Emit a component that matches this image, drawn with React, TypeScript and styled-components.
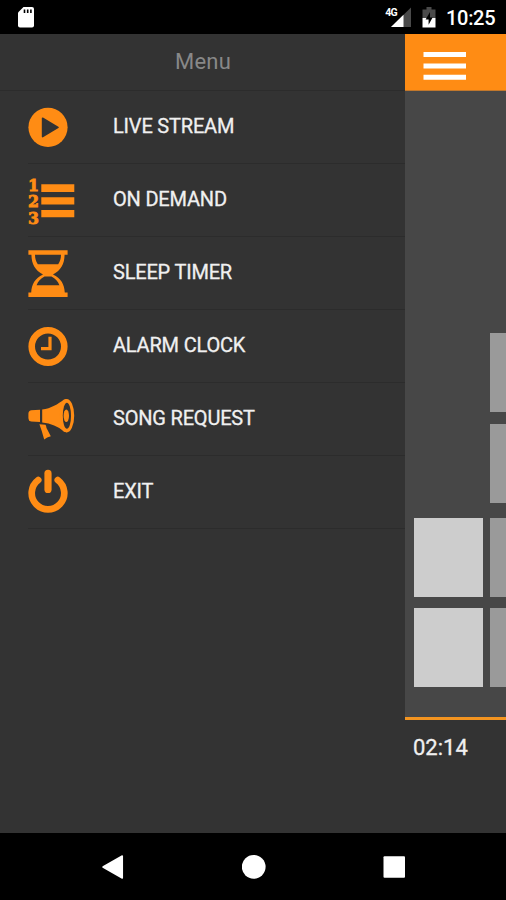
import React from "react";
import styled, { createGlobalStyle } from "styled-components";

const ORANGE = "#ff8c14";
const PANEL = "#333333";
const DIVIDER = "#2c2c2c";

const GlobalStyle = createGlobalStyle`
  body {
    margin: 0;
    background: #000;
    font-family: Roboto, "Liberation Sans", sans-serif;
  }
`;

const Screen = styled.div`
  display: flex;
  flex-direction: column;
  width: 506px;
  height: 900px;
  overflow: hidden;
  background: #000;
`;

const StatusBar = styled.header`
  display: flex;
  align-items: center;
  justify-content: space-between;
  flex: none;
  height: 34px;
  padding: 0 11px 0 16px;
  color: #fff;
`;

const StatusGroup = styled.div`
  display: flex;
  align-items: center;
`;

const Clock = styled.span`
  width: 49px;
  margin-left: 9px;
  padding-top: 2px;
  font-size: 20px;
  line-height: 32px;
  font-weight: 500;
  white-space: nowrap;
  letter-spacing: -0.3px;
`;

const Body = styled.div`
  display: flex;
  flex: none;
  height: 799px;
`;

const Drawer = styled.nav`
  display: flex;
  flex-direction: column;
  flex: none;
  width: 405px;
  background: ${PANEL};
`;

const DrawerTitle = styled.h1`
  box-sizing: border-box;
  flex: none;
  height: 57px;
  margin: 0;
  padding-left: 1px;
  border-bottom: 1px solid ${DIVIDER};
  color: #888;
  font-size: 22px;
  font-weight: 400;
  line-height: 55px;
  letter-spacing: 0.2px;
  text-align: center;
`;

const MenuList = styled.ul`
  margin: 0;
  padding: 0 0 0 28px;
  list-style: none;
`;

const MenuItem = styled.li`
  box-sizing: border-box;
  display: flex;
  align-items: flex-start;
  height: 73px;
  border-bottom: 1px solid ${DIVIDER};
`;

const MenuIcon = styled.svg`
  flex: none;
  width: 48px;
  height: 72px;
  color: ${ORANGE};
`;

const MenuLabel = styled.span`
  margin-left: 37px;
  color: #f0f0f0;
  font-size: 20px;
  line-height: 70px;
  letter-spacing: -0.19px;
  white-space: nowrap;
  -webkit-text-stroke: 0.3px #f0f0f0;
`;

const Page = styled.main`
  display: flex;
  flex-direction: column;
  flex: 1;
  min-width: 0;
  overflow: hidden;
  background: #474747;
`;

const AppBar = styled.div`
  box-sizing: border-box;
  flex: none;
  height: 57px;
  padding: 18px 0 0 18px;
  border-bottom: 1px solid #c2782c;
  background: ${ORANGE};
`;

const BurgerSvg = styled.svg`
  display: block;
  width: 44px;
  height: 30px;
`;

const Equalizer = styled.div`
  display: flex;
  align-items: flex-end;
  gap: 7px;
  box-sizing: border-box;
  flex: none;
  height: 626px;
  padding: 0 0 30px 9px;
`;

const Column = styled.div`
  display: flex;
  flex-direction: column;
  flex: none;
  width: 69px;
`;

const Block = styled.div<{ $tone: string; $gap?: number }>`
  height: 79px;
  margin-top: ${(p) => p.$gap ?? 0}px;
  background: ${(p) => p.$tone};
`;

const Player = styled.div`
  box-sizing: border-box;
  flex: 1;
  border-top: 3px solid #f39420;
  padding: 14px 0 0 8px;
  background: ${PANEL};
  color: #f0f0f0;
  font-size: 22px;
  line-height: 28px;
  -webkit-text-stroke: 0.3px #f0f0f0;
`;

const NavBar = styled.footer`
  display: flex;
  align-items: center;
  justify-content: space-between;
  flex: 1;
  padding: 0 100px 0 101px;
`;

const NavIcon = styled.svg`
  width: 24px;
  height: 26px;
`;

const PlayIcon = () => (
  <MenuIcon viewBox="0 0 48 72" fill="currentColor">
    <circle cx="20" cy="36.3" r="19.6" />
    <path d="M14.6 27.3 30 36.4 14.6 45.6Z" fill={PANEL} stroke={PANEL} strokeWidth="1.6" strokeLinejoin="round" />
  </MenuIcon>
);

const Numeral = styled.text`
  font-family: "DejaVu Serif Condensed", "DejaVu Serif", serif;
  font-stretch: condensed;
  font-size: 17.5px;
  font-weight: 700;
  text-anchor: middle;
  stroke: currentColor;
  stroke-width: 0.8px;
`;

const ListIcon = () => (
  <MenuIcon viewBox="0 0 48 72" fill="currentColor">
    <Numeral x="5.6" y="27.4">1</Numeral>
    <Numeral x="5.4" y="43.4">2</Numeral>
    <Numeral x="5.4" y="59.6">3</Numeral>
    <path d="M13.3 20.3h33V28h-33ZM13.3 33.3h33v7.2h-33ZM13.3 46h33v7.2h-33Z" />
  </MenuIcon>
);

const HourglassIcon = () => (
  <MenuIcon viewBox="0 0 48 72" fill="currentColor">
    <path
      fillRule="evenodd"
      d="M.4 13.2H39.6V17.8H36.6C36.4 27 33 33.4 25 37.5C33 41.6 36.4 47 36.8 55.5H39.6V60H.4V55.5H3.2C3.6 47 7 41.6 15 37.5C7 33.4 3.6 27 3.4 17.8H.4ZM7 17.8C7.1 21.6 7.8 24.3 9.8 27.2H30.2C32.2 24.3 32.9 21.6 33 17.8ZM16.5 39.6C12.5 41.5 10 44.5 8.6 48.2H31.4C30 44.5 27.5 41.5 23.5 39.6Z"
    />
  </MenuIcon>
);

const AlarmIcon = () => (
  <MenuIcon viewBox="0 0 48 72" fill="none" stroke="currentColor">
    <circle cx="20" cy="36.5" r="16.3" strokeWidth="6.6" />
    <path d="M22 26.7V38.6H13" strokeWidth="3.2" />
  </MenuIcon>
);

const MegaphoneIcon = () => (
  <MenuIcon viewBox="0 0 48 72" fill="currentColor">
    <path d="M3 27.2 12 26.7V38.9L3 38.5Q.4 38 .4 34.5V31Q.4 27.7 3 27.2Z" />
    <path d="M14.2 26.5C23 25.5 30 21 36 16.5L38.7 16V49.3L36 48.7C30 43.5 23 40.5 14.2 39.6Z" />
    <ellipse cx="38.7" cy="32.7" rx="7.5" ry="16.8" />
    <ellipse cx="38.9" cy="32.7" rx="4.1" ry="13" fill={PANEL} />
    <ellipse cx="38.3" cy="32.7" rx="2.7" ry="6.3" />
    <path d="M11.4 41.2 17.5 41.8Q18.2 42.8 18.5 45L22.8 53.3Q19 54 16.2 56.4Q14 48 11.4 41.2Z" />
  </MenuIcon>
);

const PowerIcon = () => (
  <MenuIcon viewBox="0 0 48 72" fill="none" stroke="currentColor" strokeLinecap="round">
    <path d="M10.2 24.1A16.3 16.3 0 1 0 29.8 24.1" strokeWidth="6.7" />
    <path d="M20 17.4V33.4" strokeWidth="7.2" />
  </MenuIcon>
);

const BurgerIcon = () => (
  <BurgerSvg viewBox="0 0 44 30">
    <path d="M.5 0H43V5H.5ZM.5 11.5H43V16.5H.5ZM.5 22.7H43V27.7H.5Z" fill="#fff" />
  </BurgerSvg>
);

const SdCardIcon = () => (
  <svg width="20" height="22" viewBox="0 0 20 22">
    <path d="M7.5 1H16Q18 1 18 3V19.5Q18 21.5 16 21.5H4Q2 21.5 2 19.5V6.5Z" fill="#fff" />
    <path d="M8.5 3.5V7M11.7 3.5V7M14.9 3.5V7" stroke="#000" strokeWidth="1.6" />
  </svg>
);

const SignalText = styled.text`
  font-size: 10.5px;
  font-weight: 700;
  letter-spacing: -0.7px;
`;

const SignalIcon = () => (
  <svg width="28" height="22" viewBox="0 0 28 22">
    <path d="M26 1.5V21H6Z" fill="#4a4a4a" />
    <path d="M18.5 8.8V21H6Z" fill="#fff" />
    <SignalText x="0.3" y="9.8" fill="#fff" stroke="#000" strokeWidth="1.6" paintOrder="stroke">4G</SignalText>
  </svg>
);

const BatterySvg = styled.svg`
  margin-left: 8px;
`;

const BatteryIcon = () => (
  <BatterySvg width="16" height="22" viewBox="0 0 16 22">
    <path d="M5.5 1H10.5V3.5H14.5V12H1.5V3.5H5.5Z" fill="#4a4a4a" />
    <path d="M1.5 12H14.5V21.5H1.5Z" fill="#fff" />
    <path d="M9 6 4.6 13.6H7.6V18.8L11.6 11.5H9Z" fill="#000" />
  </BatterySvg>
);

const ITEMS = [
  { label: "LIVE STREAM", Icon: PlayIcon },
  { label: "ON DEMAND", Icon: ListIcon },
  { label: "SLEEP TIMER", Icon: HourglassIcon },
  { label: "ALARM CLOCK", Icon: AlarmIcon },
  { label: "SONG REQUEST", Icon: MegaphoneIcon },
  { label: "EXIT", Icon: PowerIcon },
];

export default function App() {
  return (
    <Screen>
      <GlobalStyle />
      <StatusBar>
        <SdCardIcon />
        <StatusGroup>
          <SignalIcon />
          <BatteryIcon />
          <Clock>10:25</Clock>
        </StatusGroup>
      </StatusBar>
      <Body>
        <Drawer>
          <DrawerTitle>Menu</DrawerTitle>
          <MenuList>
            {ITEMS.map(({ label, Icon }) => (
              <MenuItem key={label}>
                <Icon />
                <MenuLabel>{label}</MenuLabel>
              </MenuItem>
            ))}
          </MenuList>
        </Drawer>
        <Page>
          <AppBar>
            <BurgerIcon />
          </AppBar>
          <Equalizer>
            <Column>
              <Block $tone="#cdcdcd" />
              <Block $tone="#cdcdcd" $gap={11} />
            </Column>
            <Column>
              <Block $tone="#9a9a9a" />
              <Block $tone="#9a9a9a" $gap={12} />
              <Block $tone="#9a9a9a" $gap={15} />
              <Block $tone="#9a9a9a" $gap={11} />
            </Column>
          </Equalizer>
          <Player>02:14</Player>
        </Page>
      </Body>
      <NavBar>
        <NavIcon viewBox="0 0 24 26">
          <path d="M2 13 21.3 2V24Z" fill="#fff" stroke="#fff" strokeWidth="1.5" strokeLinejoin="round" />
        </NavIcon>
        <NavIcon viewBox="0 0 24 26">
          <circle cx="11.7" cy="12.8" r="11.9" fill="#fff" />
        </NavIcon>
        <NavIcon viewBox="0 0 24 26">
          <rect x="1.5" y="2.2" width="21.5" height="21.6" rx="1" fill="#fff" />
        </NavIcon>
      </NavBar>
    </Screen>
  );
}
